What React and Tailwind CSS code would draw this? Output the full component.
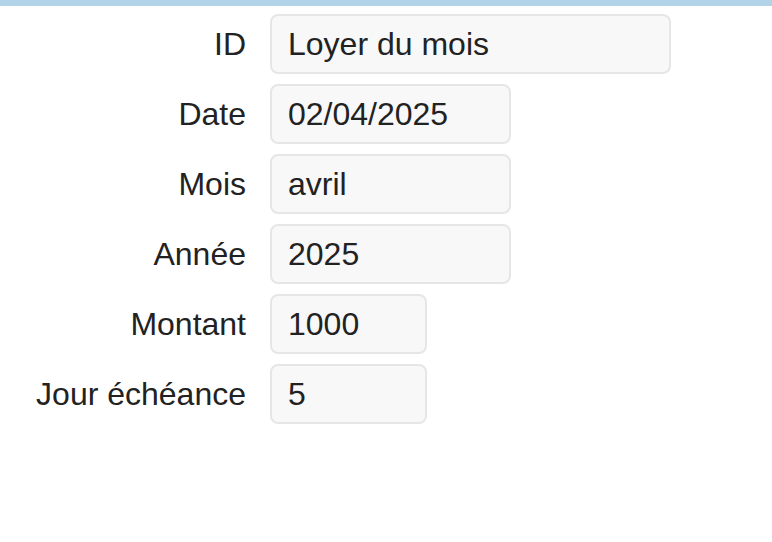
export default function App() {
  const rows = [
    { label: "ID", value: "Loyer du mois", w: "w-[401px]" },
    { label: "Date", value: "02/04/2025", w: "w-[241px]" },
    { label: "Mois", value: "avril", w: "w-[241px]" },
    { label: "Année", value: "2025", w: "w-[241px]" },
    { label: "Montant", value: "1000", w: "w-[157px]" },
    { label: "Jour échéance", value: "5", w: "w-[157px]" },
  ];
  return (
    <div className="w-[772px] h-[542px] bg-white overflow-hidden" style={{ fontFamily: '"Liberation Sans", Arial, sans-serif' }}>
      <div className="h-[6px] bg-[#b3d3e8]" />
      <div className="flex flex-col gap-[10px] pt-[8px]">
        {rows.map((r) => (
          <div key={r.label} className="flex items-center">
            <div className="w-[246px] text-right text-[32px] text-[#222] leading-none">{r.label}</div>
            <div className={`ml-[24px] ${r.w} h-[60px] rounded-[8px] border-2 border-[#e6e6e6] bg-[#f8f8f8] flex items-center pl-[16px] text-[32px] text-[#222] leading-none`}>
              {r.value}
            </div>
          </div>
        ))}
      </div>
    </div>
  );
}
